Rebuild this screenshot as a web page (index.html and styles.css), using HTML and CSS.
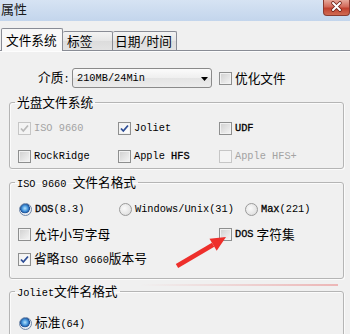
FILE: index.html
```html
<!DOCTYPE html>
<html lang="zh">
<head>
<meta charset="utf-8">
<title>属性</title>
<link rel="stylesheet" href="styles.css">
</head>
<body>
<div class="titlebar">
  <span class="title">属性</span>
  <span class="close"><svg width="27" height="16" viewBox="0 0 27 16"><path d="M10 4 L17 11 M17 4 L10 11" stroke="#6b2218" stroke-width="3.6" stroke-linecap="round"/><path d="M10 4 L17 11 M17 4 L10 11" stroke="#fff" stroke-width="2" stroke-linecap="round"/></svg></span>
</div>
<div class="tabs">
  <div class="tab active t1">文件系统</div>
  <div class="tab t2">标签</div>
  <div class="tab t3">日期<span class="en">/</span>时间</div>
</div>
<div class="page">
  <div class="media-row">
    <span class="media-label">介质<span class="en">:</span></span>
    <div class="combo"><span class="en">210MB/24Min</span><svg class="drop" width="7" height="4" viewBox="0 0 7 4"><path d="M0 0 H7 L3.5 4 Z" fill="#000"/></svg></div>
    <div class="opt"><span class="cb"></span><span>优化文件</span></div>
  </div>

  <fieldset class="group g1">
    <legend>光盘文件系统</legend>
    <div class="grid">
      <div class="opt disabled"><span class="cb dis"><svg width="11" height="11" viewBox="0 0 11 11"><path d="M2 5.5 L4.3 8 L9 2.5" fill="none" stroke="#b9b9b9" stroke-width="1.7"/></svg></span><span class="en">ISO 9660</span></div>
      <div class="opt"><span class="cb on"><svg width="11" height="11" viewBox="0 0 11 11"><path d="M2 5.5 L4.3 8 L9 2.5" fill="none" stroke="#2d4d96" stroke-width="1.8"/></svg></span><span class="en">Joliet</span></div>
      <div class="opt"><span class="cb"></span><span class="en sb">UDF</span></div>
      <div class="opt"><span class="cb"></span><span class="en">RockRidge</span></div>
      <div class="opt"><span class="cb"></span><span class="en">Apple <span class="sb">HFS</span></span></div>
      <div class="opt disabled"><span class="cb dis"></span><span class="en">Apple HFS+</span></div>
    </div>
  </fieldset>

  <fieldset class="group g2">
    <legend><span class="en">ISO 9660 </span>文件名格式</legend>
    <div class="row">
      <div class="opt c1"><span class="rb sel"></span><span class="en"><span class="sb">DOS</span>(8.3)</span></div>
      <div class="opt c2"><span class="rb"></span><span class="en">Windows/Unix(31)</span></div>
      <div class="opt"><span class="rb"></span><span class="en"><span class="sb">Max</span>(221)</span></div>
    </div>
    <div class="row">
      <div class="opt cw"><span class="cb"></span><span>允许小写字母</span></div>
      <div class="opt"><span class="cb"></span><span class="en sb">DOS </span><span>字符集</span></div>
    </div>
    <div class="row">
      <div class="opt"><span class="cb on"><svg width="11" height="11" viewBox="0 0 11 11"><path d="M2 5.5 L4.3 8 L9 2.5" fill="none" stroke="#2d4d96" stroke-width="1.8"/></svg></span><span>省略<span class="en">ISO 9660</span>版本号</span></div>
    </div>
  </fieldset>

  <fieldset class="group g3">
    <legend><span class="en">Joliet</span>文件名格式</legend>
    <div class="row">
      <div class="opt c1"><span class="rb sel"></span><span>标准<span class="en">(64)</span></span></div>
    </div>
  </fieldset>
</div>

<svg class="annot" width="350" height="334" viewBox="0 0 350 334">
  <defs>
    <linearGradient id="pink" x1="0" x2="1" y1="0" y2="0">
      <stop offset="0" stop-color="#e87070" stop-opacity="0"/>
      <stop offset="1" stop-color="#e87070" stop-opacity="0.45"/>
    </linearGradient>
  </defs>
  <rect x="140" y="284" width="198" height="2" fill="url(#pink)"/>
  <polygon points="175.8,264 178.2,268 214.3,246.7 211.9,242.7" fill="#ee2f2b"/>
  <polygon points="226,237 216.7,250.7 209.5,238.7" fill="#ee2f2b"/>
</svg>
</body>
</html>
```

FILE: styles.css
```css
* { box-sizing: border-box; }
html, body { margin: 0; padding: 0; }
body {
  width: 350px;
  height: 334px;
  overflow: hidden;
  position: relative;
  background: #f0f0f0;
  font-family: "Noto Sans CJK SC", sans-serif;
  font-size: 12.7px;
  color: #000;
}
.en {
  font-family: "Liberation Mono", "Noto Sans CJK SC", monospace;
  font-size: 10.3px;
}
.sb { -webkit-text-stroke: 0.3px #000; }

/* title bar */
.titlebar {
  height: 21px;
  display: flex;
  justify-content: space-between;
  align-items: flex-start;
  background: linear-gradient(#d6e3f3, #c3d5ec);
}
.title {
  font-size: 13px;
  line-height: 18px;
  padding-left: 1px;
  color: #1a1a1a;
}
.close {
  width: 27px;
  height: 16px;
  display: block;
  border: 1px solid #8a3a30;
  border-top: none;
  border-radius: 0 0 4px 4px;
  background: linear-gradient(#e6a89a, #d26a5a 45%, #c1412f 55%, #cf6a52);
  overflow: hidden;
}
.close svg { display: block; margin: -1px 0 0 -1px; }

/* tabs */
.tabs {
  height: 29px;
  display: flex;
  align-items: flex-end;
  padding-left: 1px;
  position: relative;
  z-index: 1;
}
.tab {
  height: 19px;
  display: flex;
  align-items: center;
  border: 1px solid #898c95;
  border-bottom: none;
  border-radius: 2px 2px 0 0;
  background: linear-gradient(#f3f3f3, #e6e6e6 50%, #dcdcdc 50%, #e3e3e3);
  line-height: 16px;
}
.tab.active {
  height: 23px;
  margin-bottom: -1px;
  background: #f8f8f8;
}
.t1 { width: 62px; padding-left: 4px; }
.t2 { width: 50px; padding-left: 4px; border-left: none; }
.t3 { width: 64px; padding-left: 2px; border-left: none; }

/* page */
.page {
  height: 284px;
  border-top: 1px solid #898c95;
  box-shadow: inset 0 1px #fdfdfd;
  background: #f0f0f0;
}
.media-row {
  margin-top: 17px;
  height: 20px;
  display: flex;
  align-items: center;
}
.media-label {
  margin-left: 38px;
  width: 34px;
  line-height: 16px;
}
.combo {
  width: 140px;
  height: 20px;
  margin-right: 7px;
  border: 1px solid #8a8a8a;
  border-radius: 3px;
  background: linear-gradient(#fbfbfb, #efefef 50%, #e4e4e4 50%, #ececec);
  display: flex;
  align-items: center;
  justify-content: space-between;
  padding: 0 3px 0 4px;
  line-height: 16px;
}
.drop { display: block; margin-top: 1px; }

.opt {
  display: flex;
  align-items: center;
  gap: 3px;
  line-height: 16px;
  white-space: nowrap;
}
.disabled { color: #a3a3a3; }

.cb {
  width: 13px;
  height: 13px;
  flex: none;
  border: 1px solid #8e8f8f;
  background: linear-gradient(135deg, #cfcfcf, #f6f6f6);
  box-shadow: inset 0 0 0 1px #f2f2f2;
  display: flex;
  align-items: center;
  justify-content: center;
}
.cb.on { background: linear-gradient(135deg, #f0f0f0, #ffffff); }
.cb.dis {
  border-color: #c6c6c6;
  background: #f4f4f4;
  box-shadow: none;
}
.cb svg { display: block; }

.rb {
  width: 13px;
  height: 13px;
  flex: none;
  border-radius: 50%;
  border: 1px solid #9a9a9a;
  background: radial-gradient(circle at 40% 40%, #fafafa 0, #e6e6e6 60%, #d0d0d0 100%);
  margin-left: 1px;
}
.rb.sel {
  border-color: #6f87a8;
  background:
    radial-gradient(circle at 45% 40%, #b8e2fb 0, #4a9be0 30%, #1c4f97 52%, #e6e9ee 58%, #f4f4f4 100%);
}

/* group boxes */
.group {
  margin: 0 0 0 9px;
  width: 335px;
  min-width: 0;
  border: 1px solid #b5b5b5;
  border-radius: 3px;
  box-shadow: inset 1px 1px #fbfbfb, 1px 1px #fbfbfb;
  padding: 0 0 0 8px;
}
.group legend {
  padding: 0 2px;
  margin-left: -3px;
  line-height: 16px;
  height: 16px;
}
.g1 { margin-top: 6px; padding-top: 10px; padding-bottom: 4px; }
.g2 { margin-top: 5px; padding-top: 11px; padding-bottom: 11px; }
.g3 { margin-top: 4px; padding-top: 16px; padding-bottom: 8px; }

.grid {
  display: grid;
  grid-template-columns: 100px 101px 1fr;
  grid-auto-rows: 16px;
  row-gap: 12px;
}
.row {
  height: 16px;
  display: flex;
  align-items: center;
}
.row + .row { margin-top: 9px; }
.c1 { width: 100px; }
.c2 { width: 126px; }
.cw { width: 201px; }

.annot {
  position: absolute;
  left: 0;
  top: 0;
  pointer-events: none;
}
```
